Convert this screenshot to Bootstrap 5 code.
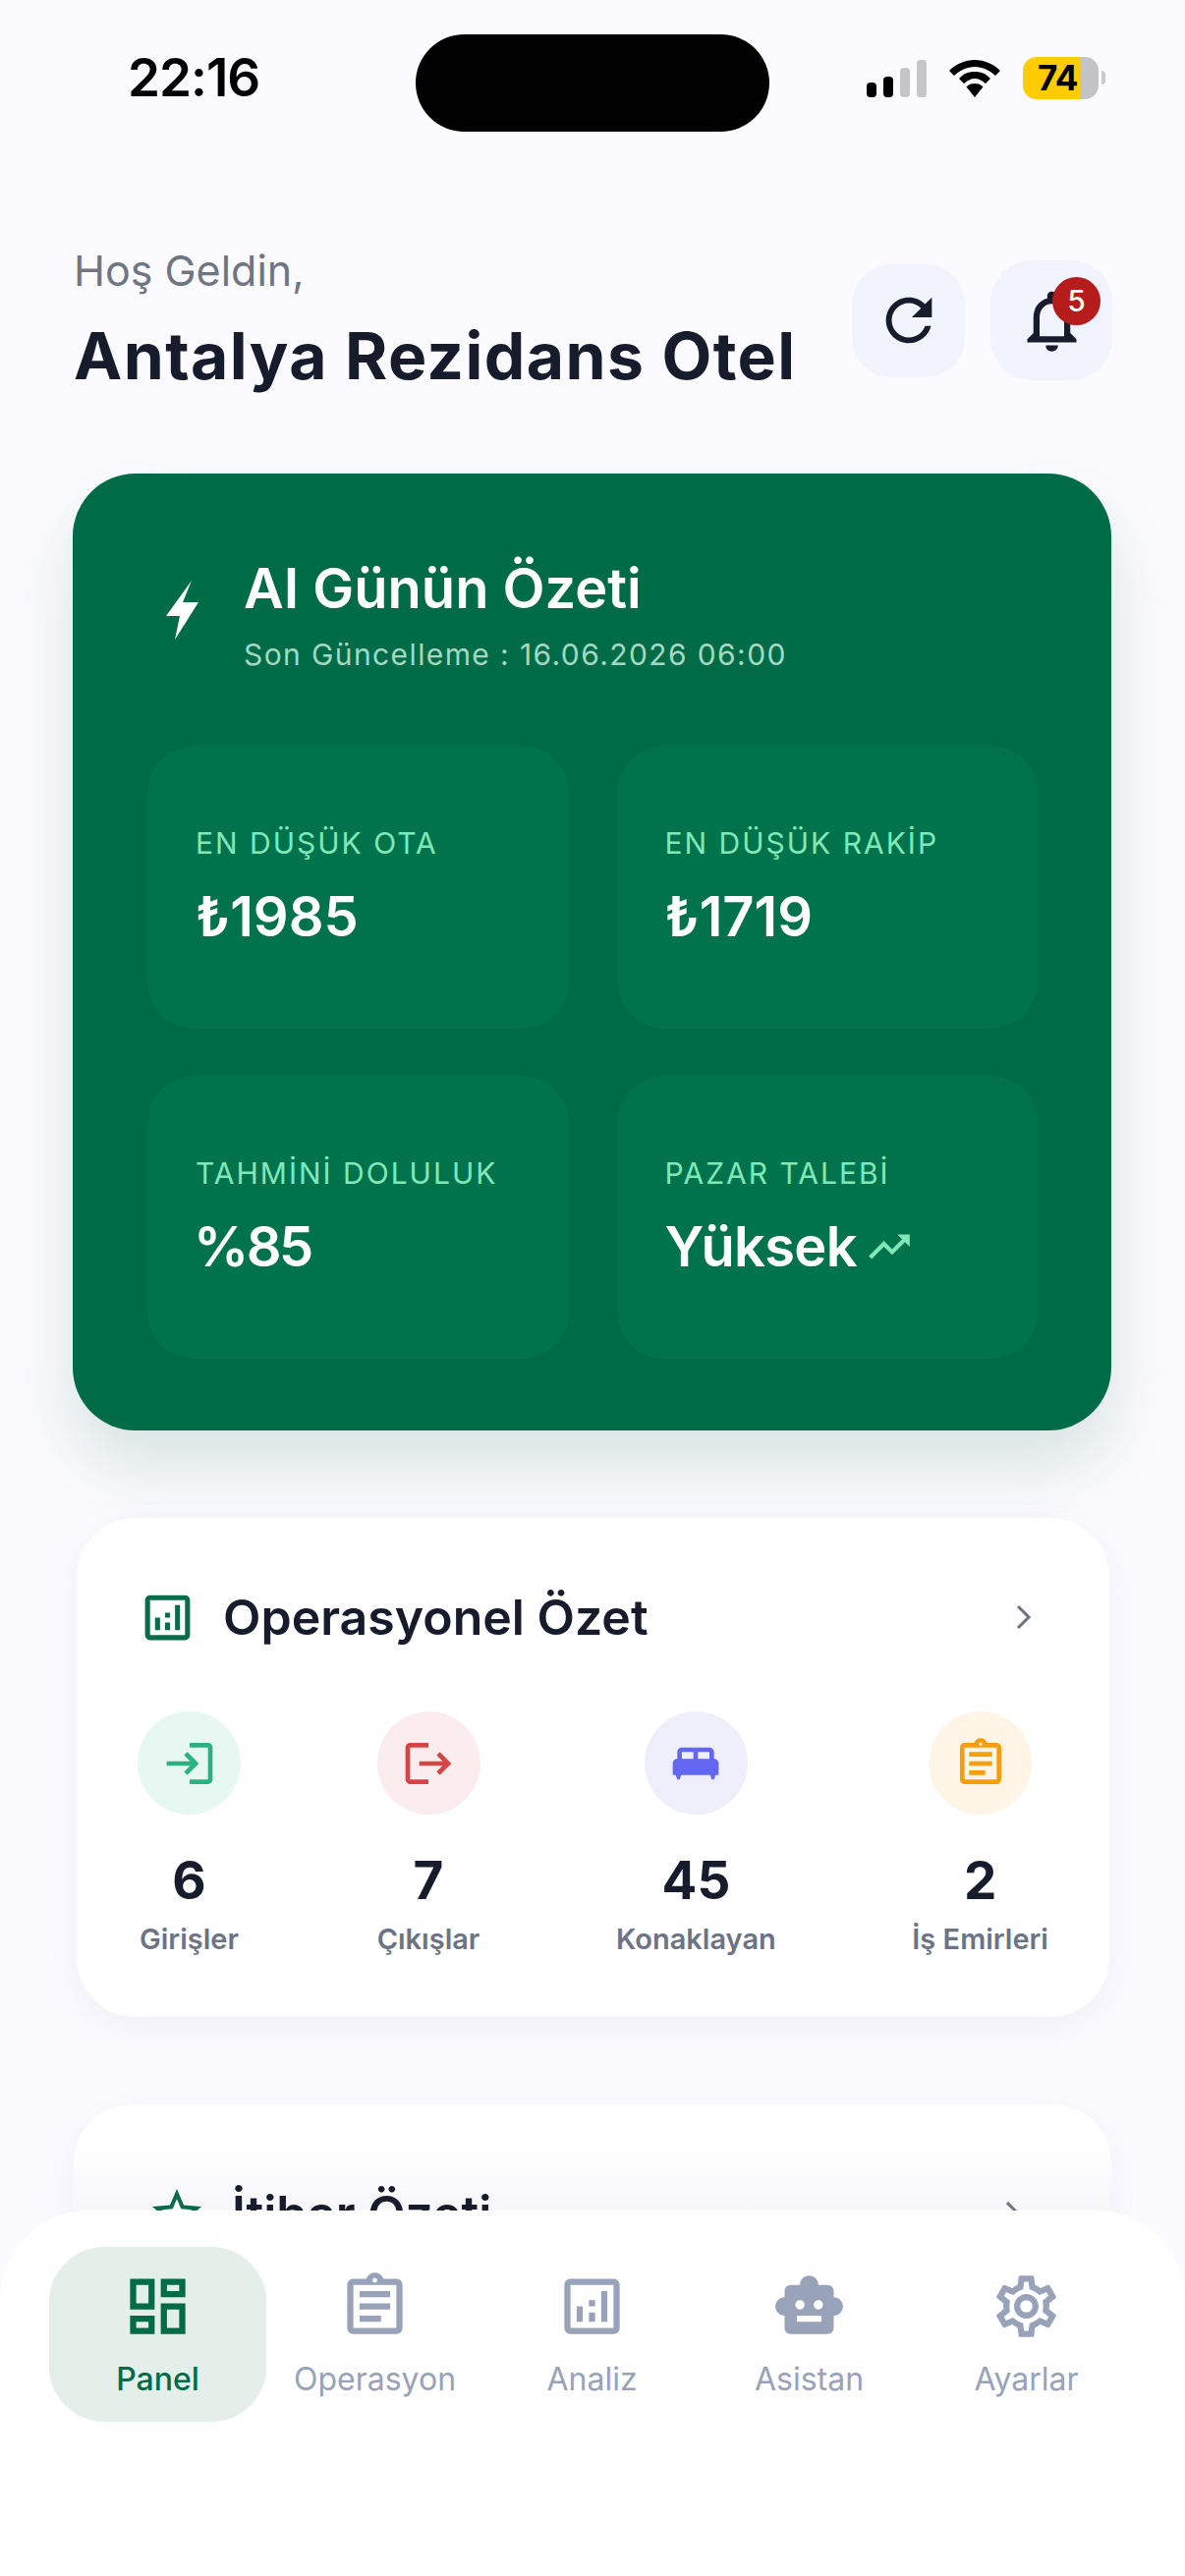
<!DOCTYPE html>
<html lang="tr">
<head>
  <meta charset="UTF-8" />
  <meta name="viewport" content="width=device-width, initial-scale=1" />
  <title>Panel</title>
  <link href="https://cdn.jsdelivr.net/npm/bootstrap@5.3.3/dist/css/bootstrap.min.css" rel="stylesheet" />
  <style>
    html, body { height: 100%; }
    body {
      background: #fbfbff;
      color: #161c2b;
      font-family: Inter, "Noto Sans", sans-serif;
      overflow: hidden;
    }

    /* status bar */
    .status-row { padding-top: 35px; height: 134px; }
    .status-time { width: 423px; padding: 16px 0 0 130px; font-size: 53px; line-height: 56px; font-weight: 600; color: #000; letter-spacing: -1px; }
    .island { width: 360px; height: 99px; background: #000; border-radius: 50px; }
    .status-right { padding: 26px 0 0 99px; gap: 23px; }
    .signal { gap: 7px; height: 38px; }
    .signal i { display: block; width: 10px; border-radius: 4px; background: #000; }
    .signal i.off { background: #c5c5ca; }
    .battery { width: 77px; height: 43px; margin-top: -3px; border-radius: 14px; background: linear-gradient(90deg, #ffcc00 75%, #c4c4c8 75%); font-size: 35px; line-height: 43px; font-weight: 700; color: #000; padding-left: 15px; letter-spacing: -.5px; }
    .battery-nub { width: 4px; height: 14px; margin: 11px 0 0 3px; border-radius: 0 4px 4px 0; background: #c9c9ce; }

    /* header */
    .top-head { margin: 116px 74px 0 75px; }
    .hello { font-size: 43px; line-height: 50px; color: #6f7682; font-weight: 400; margin-bottom: 22px; }
    .hotel-name { font-size: 66px; line-height: 80px; font-weight: 700; margin: 0; color: #161c2b; letter-spacing: 1.4px; }
    .head-btn { background: #f1f4fc; border: 0; padding: 0; position: relative; }
    .head-btn.refresh { width: 115px; height: 115px; border-radius: 40px; margin-right: 26px; }
    .head-btn.bell { width: 124px; height: 122px; border-radius: 42px; }
    .bell-count { position: absolute; top: 17px; left: 63px; width: 49px; height: 49px; border-radius: 50%; background: #b71c1c; color: #fff; font-size: 30px; line-height: 49px; font-weight: 500; }

    /* green card */
    .ai-card { margin: 80px 75px 0 74px; padding: 82px 75px 73px 76px; background: #006b47; border-radius: 64px; box-shadow: 0 36px 70px rgba(0, 80, 60, .14); color: #fff; }
    .ai-head { padding-left: 19px; gap: 46px; margin-bottom: 73px; }
    .ai-bolt { margin-top: -8px; }
    .ai-title { font-size: 56px; line-height: 70px; font-weight: 600; margin: 0 0 12px; }
    .ai-sub { font-size: 30px; line-height: 40px; color: #a5d8c2; letter-spacing: 1.4px; }
    .ai-grid { display: grid; grid-template-columns: 1fr 1fr; column-gap: 49px; row-gap: 48px; }
    .ai-tile { height: 288px; padding: 79px 0 0 49px; background: #00734c; border-radius: 48px; }
    .tile-label { font-size: 30px; line-height: 40px; color: #80e8b8; letter-spacing: 2px; margin-bottom: 23px; }
    .tile-value { font-size: 56px; line-height: 64px; font-weight: 600; }
    .tile-value.pct { letter-spacing: -2.5px; margin-left: -2px; }
    .tile-value.word { letter-spacing: -.7px; }

    /* white cards */
    .sum-card { margin: 89px 77px 0 78px; padding: 66px 62px 0; height: 508px; background: #fff; border: 0; border-radius: 60px; box-shadow: 0 10px 40px rgba(90, 100, 150, .08); }
    .sum-head { height: 70px; }
    .sum-title { font-size: 50px; line-height: 70px; font-weight: 600; margin: 0 0 0 26px; color: #161c2b; }
    .stat-row { margin-top: 61px; }
    .stat-circle { width: 105px; height: 105px; border-radius: 50%; }
    .stat-num { font-size: 53px; line-height: 64px; font-weight: 700; margin-top: 35px; }
    .stat-label { font-size: 29px; line-height: 40px; font-weight: 600; color: #6b7385; margin-top: 8px; }
    .sum-card.next { margin: 89px 75px 0; padding: 76px 75px 0; height: 330px; background: linear-gradient(#fff 40px, #f7f7fa 108px); }

    /* bottom bar */
    .tab-bar { height: 372px; padding: 37px 51px 0 50px; background: #fff; border-radius: 90px 90px 0 0; align-items: flex-start; flex-wrap: nowrap; }
    .tab-link { flex: 1 1 0; height: 178px; padding: 23px 0 0; border-radius: 56px; text-align: center; color: #98a2b8; font-size: 32px; line-height: 44px; font-weight: 400; }
    .tab-link svg { display: block; margin: 0 auto 15px; }
    .tab-link.active { background: #e4efea; color: #006b47; font-weight: 500; }
  </style>
</head>
<body>

  <!-- Status bar -->
  <div class="status-row d-flex">
    <div class="status-time">22:16</div>
    <div class="island"></div>
    <div class="status-right d-flex">
      <div class="signal d-flex align-items-end">
        <i style="height: 15px"></i><i style="height: 21px"></i><i class="off" style="height: 30px"></i><i class="off" style="height: 38px"></i>
      </div>
      <svg width="52" height="38" viewBox="0 0 52 38">
        <path fill="#000" d="M26 0C16 0 7 4 0 11l5 5c6-5.500 13-9 21-9s15 3.500 21 9l5-5C45 4 36 0 26 0z"/>
        <path fill="#000" d="M26 12c-7 0-12 2.500-16 7l5 5c3-3 7-5 11-5s8 2 11 5l5-5c-4-4.500-9-7-16-7z"/>
        <path fill="#000" d="M26 24c-3.500 0-6.500 1-8.500 3.500L26 38l8.500-10.500C32.500 25 29.500 24 26 24z"/>
      </svg>
      <div class="d-flex">
        <div class="battery">74</div>
        <div class="battery-nub"></div>
      </div>
    </div>
  </div>

  <!-- Header -->
  <header class="top-head d-flex justify-content-between align-items-center">
    <div>
      <div class="hello">Hoş Geldin,</div>
      <h1 class="hotel-name">Antalya Rezidans Otel</h1>
    </div>
    <div class="d-flex align-items-center">
      <button class="head-btn refresh d-flex align-items-center justify-content-center" type="button">
        <svg width="70" height="70" viewBox="0 0 24 24" fill="#161c2b"><path d="M17.65 6.35C16.2 4.900 14.210 4 12 4c-4.420 0-7.990 3.580-7.990 8s3.570 8 7.990 8c3.730 0 6.840-2.550 7.730-6h-2.080c-.82 2.330-3.040 4-5.650 4-3.310 0-6-2.690-6-6s2.690-6 6-6c1.660 0 3.140.69 4.220 1.780L13 11h7V4l-2.350 2.350z"/></svg>
      </button>
      <button class="head-btn bell d-flex align-items-center justify-content-center" type="button">
        <svg width="75" height="75" viewBox="0 0 24 24" fill="#161c2b"><path d="M12 22c1.100 0 2-.9 2-2h-4c0 1.100.9 2 2 2zm6-6v-5c0-3.070-1.630-5.640-4.500-6.320V4c0-.83-.67-1.500-1.500-1.500s-1.500.67-1.500 1.500v.68C7.640 5.360 6 7.920 6 11v5l-2 2v1h16v-1l-2-2zm-2 1H8v-6c0-2.480 1.510-4.500 4-4.500s4 2.020 4 4.500v6z"/></svg>
        <span class="bell-count">5</span>
      </button>
    </div>
  </header>

  <!-- AI card -->
  <section class="ai-card">
    <div class="ai-head d-flex align-items-center">
      <svg class="ai-bolt" width="33" height="60" viewBox="0 0 33 60" fill="#fff"><path d="M26 0L0 36h14L9 60l24-38H17z"/></svg>
      <div>
        <h2 class="ai-title">AI Günün Özeti</h2>
        <div class="ai-sub">Son Güncelleme : 16.06.2026 06:00</div>
      </div>
    </div>
    <div class="ai-grid">
      <div class="ai-tile">
        <div class="tile-label">EN DÜŞÜK OTA</div>
        <div class="tile-value">₺1985</div>
      </div>
      <div class="ai-tile">
        <div class="tile-label">EN DÜŞÜK RAKİP</div>
        <div class="tile-value">₺1719</div>
      </div>
      <div class="ai-tile">
        <div class="tile-label">TAHMİNİ DOLULUK</div>
        <div class="tile-value pct">%85</div>
      </div>
      <div class="ai-tile">
        <div class="tile-label">PAZAR TALEBİ</div>
        <div class="tile-value word d-flex align-items-center gap-2">Yüksek
          <svg width="50" height="50" viewBox="0 0 24 24" fill="#80e8b8"><path d="M16 6l2.290 2.290-4.880 4.880-4-4L2 16.590 3.410 18l6-6 4 4 6.300-6.290L22 12V6z"/></svg>
        </div>
      </div>
    </div>
  </section>

  <!-- Operasyonel ozet -->
  <section class="card sum-card">
    <div class="sum-head d-flex align-items-center">
      <svg width="61" height="61" viewBox="0 0 24 24" fill="#0a6b4a"><path d="M19 3H5c-1.100 0-2 .9-2 2v14c0 1.100.9 2 2 2h14c1.100 0 2-.9 2-2V5c0-1.100-.9-2-2-2zm0 16H5V5h14v14z"/><path d="M7 12h2v5H7zm8-5h2v10h-2zm-4 7h2v3h-2zm0-4h2v2h-2z"/></svg>
      <h3 class="sum-title">Operasyonel Özet</h3>
      <svg class="ms-auto me-3" width="18" height="28" viewBox="0 0 18 28" fill="none" stroke="#6b7385" stroke-width="3"><path d="M3 3l11 11L3 25"/></svg>
    </div>
    <div class="stat-row d-flex justify-content-between text-center">
      <div class="d-flex flex-column align-items-center">
        <div class="stat-circle d-flex align-items-center justify-content-center" style="background: #e6f8f1">
          <svg width="56" height="56" viewBox="0 0 24 24" fill="#2bb27f"><path d="M11 7L9.600 8.400l2.600 2.600H2v2h10.200l-2.600 2.600L11 17l5-5-5-5zm9 12h-8v2h8c1.100 0 2-.9 2-2V5c0-1.100-.9-2-2-2h-8v2h8v14z"/></svg>
        </div>
        <div class="stat-num">6</div>
        <div class="stat-label">Girişler</div>
      </div>
      <div class="d-flex flex-column align-items-center">
        <div class="stat-circle d-flex align-items-center justify-content-center" style="background: #fbeded">
          <svg width="56" height="56" viewBox="0 0 24 24" fill="#d64545"><path d="M17 7l-1.410 1.410L18.170 11H8v2h10.170l-2.580 2.580L17 17l5-5zM4 5h8V3H4c-1.100 0-2 .9-2 2v14c0 1.100.9 2 2 2h8v-2H4V5z"/></svg>
        </div>
        <div class="stat-num">7</div>
        <div class="stat-label">Çıkışlar</div>
      </div>
      <div class="d-flex flex-column align-items-center">
        <div class="stat-circle d-flex align-items-center justify-content-center" style="background: #efeffc">
          <svg width="56" height="56" viewBox="0 0 24 24" fill="#6366f1"><path d="M20 10V7c0-1.100-.9-2-2-2H6c-1.100 0-2 .9-2 2v3c-1.100 0-2 .9-2 2v5h1.330L4 19h1l.67-2h12.670l.66 2h1l.67-2H22v-5c0-1.100-.9-2-2-2zm-9 0H6V7h5v3zm7 0h-5V7h5v3z"/></svg>
        </div>
        <div class="stat-num">45</div>
        <div class="stat-label">Konaklayan</div>
      </div>
      <div class="d-flex flex-column align-items-center">
        <div class="stat-circle d-flex align-items-center justify-content-center" style="background: #fff5e6">
          <svg width="56" height="56" viewBox="0 0 24 24" fill="#f59e0b"><path d="M7 15h7v2H7zm0-4h10v2H7zm0-4h10v2H7zm12-4h-4.180C14.400 1.840 13.300 1 12 1c-1.300 0-2.400.84-2.820 2H5c-1.100 0-2 .9-2 2v14c0 1.100.9 2 2 2h14c1.100 0 2-.9 2-2V5c0-1.100-.9-2-2-2zm-7-.25c.41 0 .75.34.75.75s-.34.75-.75.75-.75-.34-.75-.75.34-.75.75-.75zM19 19H5V5h14v14z"/></svg>
        </div>
        <div class="stat-num">2</div>
        <div class="stat-label">İş Emirleri</div>
      </div>
    </div>
  </section>

  <!-- Itibar ozet, cut by the bar -->
  <section class="card sum-card next">
    <div class="sum-head d-flex align-items-center">
      <svg width="60" height="60" viewBox="0 0 24 24" fill="#0a6b4a"><path d="M22 9.240l-7.190-.62L12 2 9.190 8.630 2 9.240l5.460 4.730L5.820 21 12 17.270 18.180 21l-1.630-7.030L22 9.240zM12 15.400l-3.760 2.270 1-4.280-3.320-2.880 4.380-.38L12 6.100l1.710 4.030 4.380.38-3.320 2.880 1 4.280L12 15.400z"/></svg>
      <h3 class="sum-title">İtibar Özeti</h3>
      <svg class="ms-auto me-3" width="18" height="28" viewBox="0 0 18 28" fill="none" stroke="#6b7385" stroke-width="3"><path d="M3 3l11 11L3 25"/></svg>
    </div>
  </section>

  <!-- Bottom tabs -->
  <nav class="nav tab-bar fixed-bottom">
    <a class="nav-link tab-link active" href="#">
      <svg width="75" height="75" viewBox="0 0 24 24" fill="#006b47"><path d="M19 5v2h-4V5h4M9 5v6H5V5h4m10 8v6h-4v-6h4M9 17v2H5v-2h4M21 3h-8v6h8V3zM11 3H3v10h8V3zm10 8h-8v10h8V11zm-10 4H3v6h8v-6z"/></svg>
      Panel
    </a>
    <a class="nav-link tab-link" href="#">
      <svg width="75" height="75" viewBox="0 0 24 24" fill="#98a2b8"><path d="M7 15h7v2H7zm0-4h10v2H7zm0-4h10v2H7zm12-4h-4.180C14.400 1.840 13.300 1 12 1c-1.300 0-2.400.84-2.820 2H5c-1.100 0-2 .9-2 2v14c0 1.100.9 2 2 2h14c1.100 0 2-.9 2-2V5c0-1.100-.9-2-2-2zm-7-.25c.41 0 .75.34.75.75s-.34.75-.75.75-.75-.34-.75-.75.34-.75.75-.75zM19 19H5V5h14v14z"/></svg>
      Operasyon
    </a>
    <a class="nav-link tab-link" href="#">
      <svg width="75" height="75" viewBox="0 0 24 24" fill="#98a2b8"><path d="M19 3H5c-1.100 0-2 .9-2 2v14c0 1.100.9 2 2 2h14c1.100 0 2-.9 2-2V5c0-1.100-.9-2-2-2zm0 16H5V5h14v14z"/><path d="M7 12h2v5H7zm8-5h2v10h-2zm-4 7h2v3h-2zm0-4h2v2h-2z"/></svg>
      Analiz
    </a>
    <a class="nav-link tab-link" href="#">
      <svg width="75" height="75" viewBox="0 0 24 24" fill="#98a2b8"><path d="M20 9V7c0-1.100-.9-2-2-2h-3c0-1.660-1.340-3-3-3S9 3.340 9 5H6c-1.100 0-2 .9-2 2v2c-1.660 0-3 1.340-3 3s1.340 3 3 3v4c0 1.100.9 2 2 2h12c1.100 0 2-.9 2-2v-4c1.660 0 3-1.340 3-3s-1.340-3-3-3zM7.500 11.500c0-.83.67-1.500 1.500-1.500s1.500.67 1.500 1.500S9.830 13 9 13s-1.500-.67-1.500-1.500zM16 17H8v-2h8v2zm-1-4c-.83 0-1.500-.67-1.500-1.500S14.170 10 15 10s1.500.67 1.500 1.500S15.830 13 15 13z"/></svg>
      Asistan
    </a>
    <a class="nav-link tab-link" href="#">
      <svg width="75" height="75" viewBox="0 0 24 24" fill="#98a2b8"><path d="M19.430 12.980c.04-.32.07-.64.07-.98 0-.34-.03-.66-.07-.98l2.110-1.650c.19-.15.24-.42.12-.64l-2-3.460c-.09-.16-.26-.25-.44-.25-.06 0-.12.01-.17.03l-2.490 1c-.52-.4-1.080-.73-1.690-.98l-.38-2.650C14.460 2.180 14.250 2 14 2h-4c-.25 0-.46.18-.49.42l-.38 2.650c-.61.25-1.170.59-1.690.98l-2.490-1c-.06-.02-.12-.03-.18-.03-.17 0-.34.09-.43.25l-2 3.460c-.13.22-.07.49.12.64l2.110 1.650c-.04.32-.07.65-.07.98 0 .33.03.66.07.98l-2.110 1.650c-.19.15-.24.42-.12.64l2 3.460c.09.16.26.25.44.25.06 0 .12-.01.17-.03l2.490-1c.52.4 1.080.73 1.690.98l.38 2.650c.03.24.24.42.49.42h4c.25 0 .46-.18.49-.42l.38-2.650c.61-.25 1.170-.59 1.690-.98l2.490 1c.06.02.12.03.18.03.17 0 .34-.09.43-.25l2-3.460c.12-.22.07-.49-.12-.64l-2.110-1.650zm-1.980-1.710c.04.31.05.52.05.73 0 .21-.02.43-.05.73l-.14 1.130.89.7 1.080.84-.7 1.210-1.270-.51-1.040-.42-.9.68c-.43.32-.84.56-1.250.73l-1.060.43-.16 1.130-.2 1.350h-1.400l-.19-1.350-.16-1.130-1.060-.43c-.43-.18-.83-.41-1.230-.71l-.91-.7-1.060.43-1.270.51-.7-1.210 1.080-.84.89-.7-.14-1.130c-.03-.31-.05-.54-.05-.74s.02-.43.05-.73l.14-1.130-.89-.7-1.080-.84.7-1.210 1.270.51 1.040.42.9-.68c.43-.32.84-.56 1.250-.73l1.060-.43.16-1.130.2-1.350h1.390l.19 1.350.16 1.130 1.060.43c.43.18.83.41 1.230.71l.91.7 1.060-.43 1.270-.51.7 1.210-1.070.85-.89.7.14 1.130zM12 8c-2.210 0-4 1.790-4 4s1.790 4 4 4 4-1.790 4-4-1.790-4-4-4zm0 6c-1.100 0-2-.9-2-2s.9-2 2-2 2 .9 2 2-.9 2-2 2z"/></svg>
      Ayarlar
    </a>
  </nav>

  <script src="https://cdn.jsdelivr.net/npm/bootstrap@5.3.3/dist/js/bootstrap.bundle.min.js"></script>
</body>
</html>
